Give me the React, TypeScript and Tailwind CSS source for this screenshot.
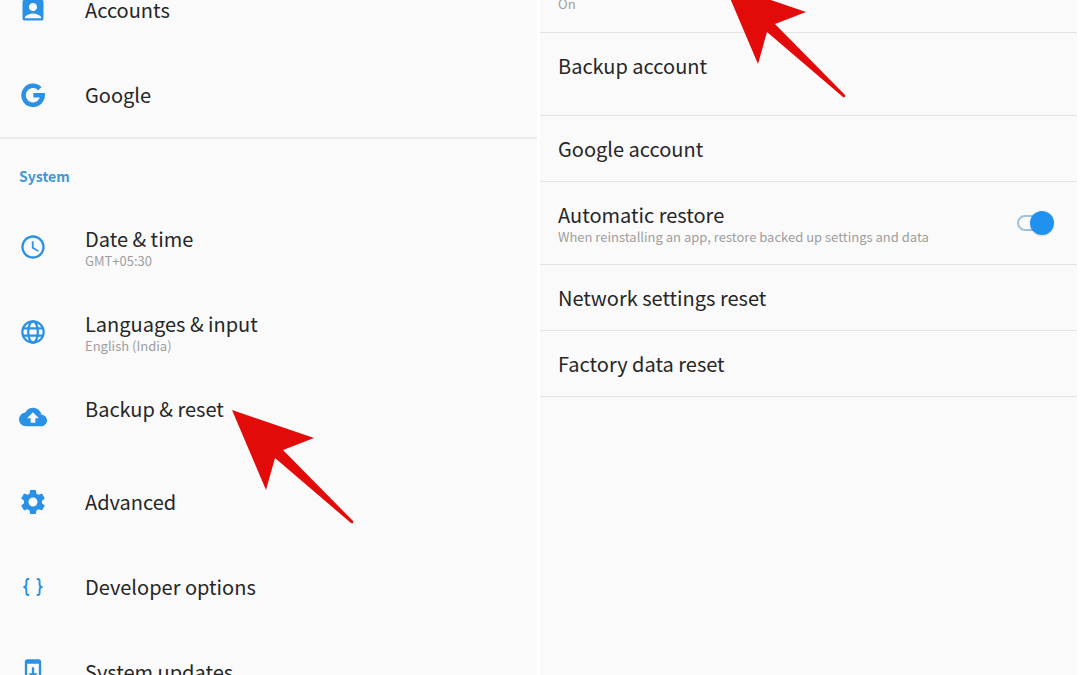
import { useState, type ReactNode } from 'react';
import { MdAccessTime, MdAccountBox, MdBackup, MdSettings, MdSystemUpdate } from 'react-icons/md';

interface SettingsItem {
  title: string;
  summary?: string;
  twoLine?: boolean;
  icon: ReactNode;
  pointed?: boolean;
}

function GoogleIcon() {
  return (
    <svg viewBox="0 0 24 24" className="size-6" fill="none" stroke="currentColor" strokeWidth="4.6" aria-hidden="true">
      <path d="M18.9 5.6A9.5 9.5 0 1 0 21.6 12.3H12.4" />
    </svg>
  );
}

function GlobeIcon() {
  return (
    <svg viewBox="0 0 24 24" className="size-6" fill="none" stroke="currentColor" strokeWidth="2.2" aria-hidden="true">
      <circle cx="12" cy="12" r="10.7" />
      <ellipse cx="12" cy="12" rx="4.8" ry="10.7" />
      <path d="M2 8.4H22M2 15.6H22" />
    </svg>
  );
}

function BracesIcon() {
  return (
    <svg viewBox="0 0 24 24" className="size-6" fill="none" stroke="currentColor" strokeWidth="1.9" aria-hidden="true">
      <path d="M8.2 4H7.4C6 4 5.4 4.8 5.4 6V9.4C5.4 11 4.4 12 2.4 12C4.4 12 5.4 13 5.4 14.6V18C5.4 19.2 6 20 7.4 20H8.2" />
      <path d="M15.8 4H16.6C18 4 18.6 4.8 18.6 6V9.4C18.6 11 19.6 12 21.6 12C19.6 12 18.6 13 18.6 14.6V18C18.6 19.2 18 20 16.6 20H15.8" />
    </svg>
  );
}

function RedArrow({ className }: { className: string }) {
  return (
    <svg viewBox="0 0 122 115" className={`pointer-events-none absolute z-10 h-[115px] w-[122px] ${className}`} aria-hidden="true">
      <path d="M0 0L82 28L51 40L121 111Q122 114 119 113L43 48L34 80Z" fill="#e30a0a" />
    </svg>
  );
}

const accountItems: SettingsItem[] = [
  { title: 'Accounts', icon: <MdAccountBox className="size-7" /> },
  { title: 'Google', icon: <GoogleIcon /> },
];

const systemItems: SettingsItem[] = [
  { title: 'Date & time', summary: 'GMT+05:30', twoLine: true, icon: <MdAccessTime className="size-7" /> },
  { title: 'Languages & input', summary: 'English (India)', twoLine: true, icon: <GlobeIcon /> },
  { title: 'Backup & reset', twoLine: true, icon: <MdBackup className="size-7" />, pointed: true },
  { title: 'Advanced', icon: <MdSettings className="size-[30px]" /> },
  { title: 'Developer options', icon: <BracesIcon /> },
  { title: 'System updates', icon: <MdSystemUpdate className="size-7" /> },
];

function ItemText({ title, summary, twoLine }: { title: string; summary?: string; twoLine?: boolean }) {
  return (
    <span className="block">
      <span className="block text-[20px] leading-[25px] text-[#262626]">{title}</span>
      {twoLine && <span className="block h-[17px] text-[13px] leading-[19px] text-[#9e9e9e]">{summary}</span>}
    </span>
  );
}

function SettingsRow({ item }: { item: SettingsItem }) {
  return (
    <li className="relative">
      <button className="flex h-[85px] w-full items-center text-left">
        <span className="flex w-[66px] shrink-0 justify-center text-[#2a91e4]">{item.icon}</span>
        <span className="pl-[19px]">
          <ItemText title={item.title} summary={item.summary} twoLine={item.twoLine} />
        </span>
      </button>
      {item.pointed && <RedArrow className="left-[232px] top-9" />}
    </li>
  );
}

function BackupRow({ title, twoLine }: { title: string; twoLine?: boolean }) {
  return (
    <li className="border-b border-[#e4e4e4]">
      <button className="w-full px-[18px] py-5 text-left">
        <ItemText title={title} twoLine={twoLine} />
      </button>
    </li>
  );
}

export default function App() {
  const [autoRestore, setAutoRestore] = useState(true);

  return (
    <main className="flex h-screen gap-[3px] overflow-hidden bg-white pr-[3px] font-['Noto_Sans_CJK_SC',sans-serif]">
      <section className="flex-1 overflow-hidden bg-[#fafafa]">
        <ul className="-mt-[33px] border-b-2 border-[#ececec]">
          {accountItems.map((item) => (
            <SettingsRow key={item.title} item={item} />
          ))}
        </ul>
        <h2 className="px-[19px] pb-[18px] pt-[27px] text-[14px] font-bold leading-5 text-[#3f97d3]">System</h2>
        <ul>
          {systemItems.map((item) => (
            <SettingsRow key={item.title} item={item} />
          ))}
        </ul>
      </section>

      <section className="relative flex-1 overflow-hidden bg-[#fafafa]">
        <RedArrow className="-top-4 left-[184px]" />
        <p className="-mt-[5px] border-b border-[#e4e4e4] px-[18px] pb-5 text-[13px] leading-[17px] text-[#9e9e9e]">On</p>
        <ul>
          <BackupRow title="Backup account" twoLine />
          <BackupRow title="Google account" />
          <li className="border-b border-[#e4e4e4]">
            <label className="flex cursor-pointer items-center justify-between py-5 pl-[18px] pr-[23px]">
              <ItemText
                title="Automatic restore"
                summary="When reinstalling an app, restore backed up settings and data"
                twoLine
              />
              <span className="relative flex h-6 w-[37px] items-center">
                <input
                  type="checkbox"
                  role="switch"
                  checked={autoRestore}
                  onChange={(e) => setAutoRestore(e.target.checked)}
                  className="peer h-4 w-8 cursor-pointer appearance-none rounded-full border-2 border-[#9bc4dc]"
                />
                <span className="absolute left-0 top-0 size-6 rounded-full bg-[#9e9e9e] shadow peer-checked:left-auto peer-checked:right-0 peer-checked:bg-[#2191f0]" />
              </span>
            </label>
          </li>
          <BackupRow title="Network settings reset" />
          <BackupRow title="Factory data reset" />
        </ul>
      </section>
    </main>
  );
}
